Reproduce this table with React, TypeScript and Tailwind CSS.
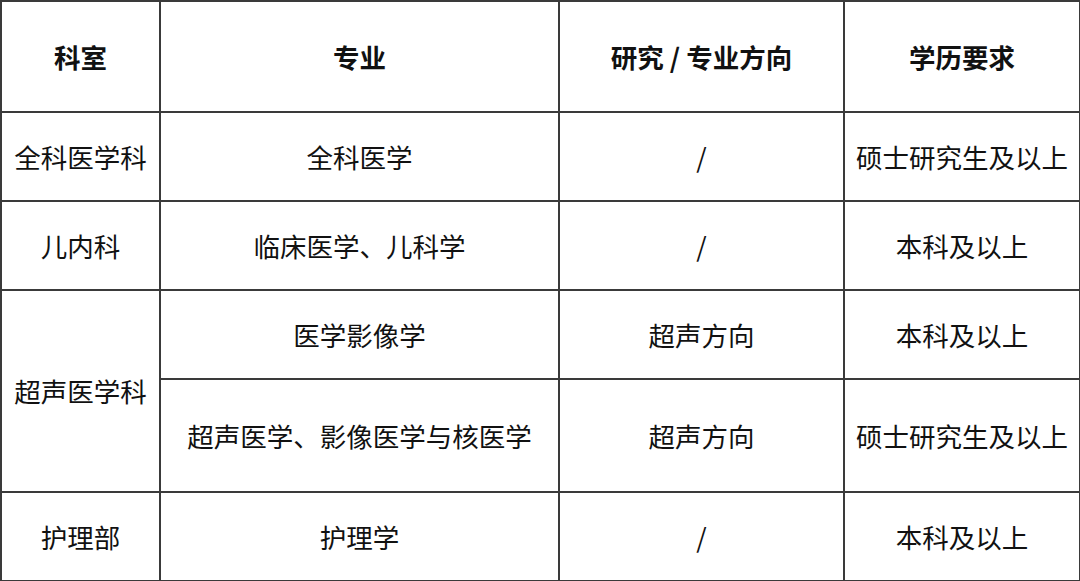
const rows: { dept?: string; span?: number; major: string; dir: string; edu: string; h: string }[] = [
  { dept: "全科医学科", major: "全科医学", dir: "/", edu: "硕士研究生及以上", h: "h-[89px]" },
  { dept: "儿内科", major: "临床医学、儿科学", dir: "/", edu: "本科及以上", h: "h-[89px]" },
  { dept: "超声医学科", span: 2, major: "医学影像学", dir: "超声方向", edu: "本科及以上", h: "h-[89px]" },
  { major: "超声医学、影像医学与核医学", dir: "超声方向", edu: "硕士研究生及以上", h: "h-[113px]" },
  { dept: "护理部", major: "护理学", dir: "/", edu: "本科及以上", h: "h-[89px]" },
];

const cell = "border-2 border-[#3a3a3a] text-center align-middle p-0";

export default function App() {
  return (
    <div className="w-[1080px] h-[581px] bg-white overflow-hidden font-['Noto_Sans_CJK_SC',serif] text-[26.5px] text-[#111]">
      <table className="border-collapse table-fixed w-[1079px]">
        <colgroup>
          <col className="w-[159px]" />
          <col className="w-[399px]" />
          <col className="w-[285px]" />
          <col className="w-[236px]" />
        </colgroup>
        <thead>
          <tr className="h-[111px] font-bold">
            <th className={cell}>科室</th>
            <th className={cell}>专业</th>
            <th className={cell}>研究 / 专业方向</th>
            <th className={cell}>学历要求</th>
          </tr>
        </thead>
        <tbody>
          {rows.map((r, i) => (
            <tr key={i} className={r.h}>
              {r.dept && (
                <td className={cell} rowSpan={r.span ?? 1}>
                  {r.dept}
                </td>
              )}
              <td className={cell}>{r.major}</td>
              <td className={cell}>{r.dir}</td>
              <td className={cell}>{r.edu}</td>
            </tr>
          ))}
        </tbody>
      </table>
    </div>
  );
}
